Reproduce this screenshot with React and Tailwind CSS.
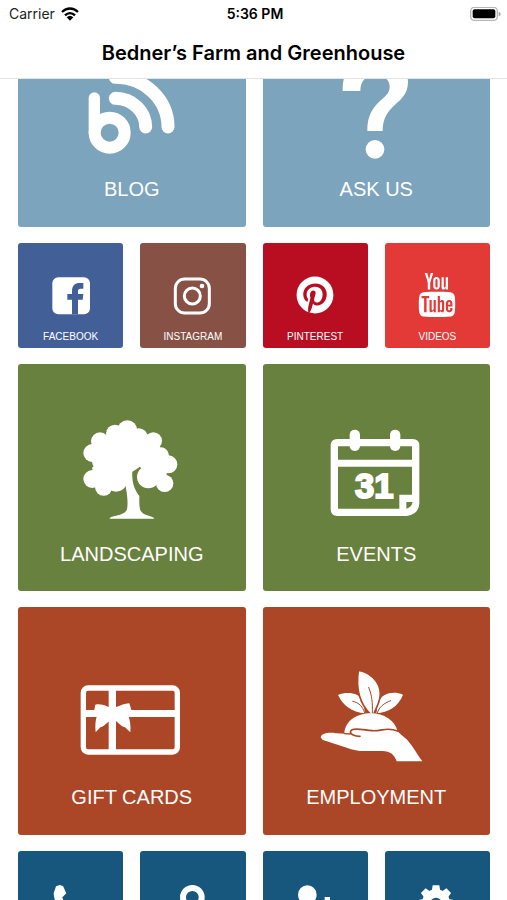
import { FaPinterest } from 'react-icons/fa'
import { TfiYoutube } from 'react-icons/tfi'

const BlogIcon = () => (
  <svg viewBox="186 -75 360 360" className="size-[120px]" fill="none" stroke="white" strokeLinecap="round" aria-hidden="true">
    <circle cx="299" cy="188" r="45" strokeWidth="36" />
    <path d="M253 84V188" strokeWidth="34" />
    <path d="M316 85A91 86 0 0 1 407 171" strokeWidth="39" />
    <path d="M316 22A157 149 0 0 1 474 171" strokeWidth="39" />
  </svg>
)

const QuestionIcon = () => (
  <svg viewBox="184 -75 360 360" className="size-[120px]" fill="white" aria-hidden="true">
    <path d="M264 63C264 -10 300 -45 362 -45C420 -45 460 -15 460 35C460 105 384 98 384 183H338C338 90 405 92 405 50C405 27 385 16 362 16C335 16 317 32 317 63Z" />
    <circle cx="361" cy="238" r="28" />
  </svg>
)

const TreeIcon = () => (
  <svg viewBox="36 27 360 360" className="size-[120px]" fill="white" aria-hidden="true">
    <circle cx="202" cy="88" r="30" />
    <circle cx="165" cy="98" r="27" />
    <circle cx="120" cy="121" r="27" />
    <circle cx="97" cy="156" r="27" />
    <circle cx="97" cy="234" r="27" />
    <circle cx="131" cy="258" r="26" />
    <circle cx="168" cy="238" r="34" />
    <circle cx="236" cy="110" r="28" />
    <circle cx="280" cy="120" r="26" />
    <circle cx="302" cy="164" r="25" />
    <circle cx="325" cy="190" r="27" />
    <circle cx="314" cy="247" r="26" />
    <circle cx="265" cy="228" r="34" />
    <circle cx="150" cy="170" r="56" />
    <circle cx="200" cy="145" r="56" />
    <circle cx="262" cy="160" r="44" />
    <path d="M96 200L120 180H205V255H110Z" />
    <path d="M190 180L240 190L236 200L217 212C215 240 222 265 238 285C238 295 237 308 240 325C246 346 278 343 283 353H149C152 343 194 346 201 325C204 310 203 290 197 256Z" />
    <path d="M270 180H320V245H270Z" />
  </svg>
)

const CalendarIcon = () => (
  <svg viewBox="18 -18 360 360" className="size-[120px]" fill="white" aria-hidden="true">
    <path
      fillRule="evenodd"
      d="M82 69H308Q328 69 328 89V262Q326 296 290 300H82Q62 300 62 280V89Q62 69 82 69ZM84 91V131H306V91ZM84 152V278H268V236H306V152ZM289 258V278Q304 275 308 258Z"
    />
    <rect x="119" y="41" width="31" height="64" rx="15" />
    <rect x="240" y="41" width="31" height="64" rx="15" />
    <text
      x="193"
      y="247"
      textAnchor="middle"
      fontSize="104"
      fontWeight="700"
      stroke="white"
      strokeWidth="6"
      className="font-['Liberation_Sans',sans-serif]"
    >
      31
    </text>
  </svg>
)

const GiftCardIcon = () => (
  <svg viewBox="36 -51 360 360" className="size-[120px]" fill="white" aria-hidden="true">
    <rect x="70" y="54" width="282" height="192" rx="14" fill="none" stroke="white" strokeWidth="16" />
    <path d="M146 54H168V246H146ZM70 120H352V141H70Z" />
    <path d="M158 115C145 112 125 98 106 104L102 124L111 137C106 150 105 168 107 187L121 172C136 168 145 152 158 147C171 152 180 168 195 172L211 187C213 168 210 150 205 137L215 122L208 100C190 100 171 112 158 115Z" />
  </svg>
)

const PlantHandIcon = () => (
  <svg viewBox="48 -21 360 360" className="size-[120px]" fill="white" aria-hidden="true">
    <path d="M114 105C140 94 178 98 188 122C194 138 192 150 196 160C155 157 128 135 114 105Z" />
    <path d="M309 104C280 92 246 100 236 126C229 142 232 150 229 160C265 157 295 140 309 104Z" />
    <path
      d="M175 31C206 34 241 62 241 102C240 130 228 142 221 163H212C188 140 165 100 175 31Z"
      stroke="#ab4626"
      strokeWidth="5"
    />
    <path d="M133 220C135 180 175 160 212 160C252 160 285 182 292 212L270 225H150Z" />
    <path d="M62 232C66 218 90 217 108 220L152 222C156 206 185 209 215 213C245 217 262 200 290 212L322 240C340 260 352 285 367 304H290C284 284 270 271 240 273H180C145 268 110 252 68 240Z" />
    <g fill="none" stroke="#ab4626" strokeLinecap="round">
      <path d="M180 229C166 229 148 224 152 213C160 202 190 210 215 212C245 215 260 199 292 213" strokeWidth="5" />
      <path d="M133 221L150 222" strokeWidth="4" />
      <path d="M206 82C216 105 218 130 217 158" strokeWidth="3" />
      <path d="M158 124C178 128 188 140 194 158" strokeWidth="3" />
      <path d="M272 122C250 130 238 142 232 158" strokeWidth="3" />
    </g>
  </svg>
)

const FacebookIcon = () => (
  <svg viewBox="116 112 132 132" className="size-11" aria-hidden="true">
    <rect x="126" y="125" width="113" height="111" rx="18" fill="white" />
    <path
      d="M185 236V192H171V175H185V166C185 150 194 142 208 142H219V159H211C205 159 203 162 203 167V175H219L217 192H203V236Z"
      fill="#435f98"
    />
  </svg>
)

const InstagramIcon = () => (
  <svg viewBox="483 112 132 132" className="size-11" fill="none" stroke="white" strokeWidth="9" aria-hidden="true">
    <rect x="496" y="130" width="102" height="102" rx="28" />
    <circle cx="547" cy="181" r="24" />
    <circle cx="576" cy="151" r="7" fill="white" stroke="none" />
  </svg>
)

const PinterestIcon = () => <FaPinterest className="size-11 p-[3px]" aria-hidden="true" />

const YoutubeIcon = () => <TfiYoutube className="size-11" aria-hidden="true" />

const PhoneIcon = () => (
  <svg viewBox="116 166 132 132" className="size-11" fill="white" aria-hidden="true">
    <path d="M137 182L148 178L158 181L168 203L156 215C160 232 178 250 196 262L210 252L233 268L226 284C190 300 131 250 130 203Z" />
  </svg>
)

const PinIcon = () => (
  <svg viewBox="483 166 132 132" className="size-11" fill="white" aria-hidden="true">
    <path
      fillRule="evenodd"
      d="M547 178A37 37 0 0 1 584 215C584 240 560 262 547 290C534 262 510 240 510 215A37 37 0 0 1 547 178ZM547 196A19 19 0 1 0 547 234A19 19 0 1 0 547 196Z"
    />
  </svg>
)

const AddUserIcon = () => (
  <svg viewBox="114 166 132 132" className="size-11" fill="white" aria-hidden="true">
    <circle cx="157" cy="207" r="28" />
    <path d="M118 284C118 256 134 242 157 242S196 256 196 284Z" />
    <path d="M209 214H225V230H240V246H225V260H209V246H196V230H209Z" />
  </svg>
)

const GearIcon = () => (
  <svg viewBox="481 166 132 132" className="size-11" aria-hidden="true">
    <g fill="white">
      <circle cx="544" cy="233" r="42" />
      {[0, 45, 90, 135, 180, 225, 270, 315].map((angle) => (
        <path key={angle} d="M534 179H554L557 198H531Z" transform={`rotate(${angle} 544 233)`} />
      ))}
    </g>
    <circle cx="544" cy="233" r="17" fill="#17577d" />
  </svg>
)

const TILES = [
  { label: 'BLOG', color: 'bg-[#7da4bd]', icon: BlogIcon, large: true },
  { label: 'ASK US', color: 'bg-[#7da4bd]', icon: QuestionIcon, large: true },
  { label: 'FACEBOOK', color: 'bg-[#435f98]', icon: FacebookIcon },
  { label: 'INSTAGRAM', color: 'bg-[#875245]', icon: InstagramIcon },
  { label: 'PINTEREST', color: 'bg-[#b90e22]', icon: PinterestIcon },
  { label: 'VIDEOS', color: 'bg-[#e33a38]', icon: YoutubeIcon },
  { label: 'LANDSCAPING', color: 'bg-[#69813e]', icon: TreeIcon, large: true },
  { label: 'EVENTS', color: 'bg-[#69813e]', icon: CalendarIcon, large: true },
  { label: 'GIFT CARDS', color: 'bg-[#ab4626]', icon: GiftCardIcon, large: true },
  { label: 'EMPLOYMENT', color: 'bg-[#ab4626]', icon: PlantHandIcon, large: true },
  { name: 'Call', color: 'bg-[#17577d]', icon: PhoneIcon },
  { name: 'Location', color: 'bg-[#17577d]', icon: PinIcon },
  { name: 'Add contact', color: 'bg-[#17577d]', icon: AddUserIcon },
  { name: 'Settings', color: 'bg-[#17577d]', icon: GearIcon },
]

const Tile = ({ label, name, color, icon: Icon, large }) => (
  <a
    href="#"
    aria-label={name}
    className={`flex flex-col items-center aspect-square rounded-[3px] text-white whitespace-nowrap ${color} ${
      large ? 'col-span-2 pt-[46px] gap-3 text-xl leading-6' : 'pt-[30px] gap-[14px] text-[10px] leading-3'
    }`}
  >
    <Icon />
    {label && <span>{label}</span>}
  </a>
)

const StatusBar = () => (
  <div className="grid grid-cols-3 items-center h-7 pl-[9px] pr-[6px] text-sm">
    <div className="flex items-center gap-[6px] text-[#222]">
      <span>Carrier</span>
      <svg viewBox="0 0 54 42" className="w-[18px] h-[14px]" fill="none" stroke="black" aria-hidden="true">
        <path d="M3 15C17 1 37 1 51 15" strokeWidth="7" />
        <path d="M12 25C21 16 33 16 42 25" strokeWidth="7" />
        <path d="M27 41L17 31Q27 22 37 31Z" fill="black" stroke="none" />
      </svg>
    </div>
    <span className="text-center font-semibold">5:36 PM</span>
    <svg viewBox="0 0 93 42" className="w-[31px] h-[14px] justify-self-end" aria-hidden="true">
      <rect x="2" y="1" width="80" height="39" rx="11" fill="white" stroke="#b5b5b5" strokeWidth="4" />
      <rect x="8" y="7" width="68" height="27" rx="6" fill="black" />
      <path d="M86 14Q92 16 92 21T86 28Z" fill="#a3a3a3" />
    </svg>
  </div>
)

const App = () => (
  <div className="h-screen overflow-hidden bg-white font-['Liberation_Sans',Arial,sans-serif]">
    <header className="fixed top-0 inset-x-0 z-10 bg-white border-b border-[#e3e3e3] text-black font-[Inter,sans-serif]">
      <StatusBar />
      <h1 className="h-[50px] text-center text-xl font-semibold leading-[50px]">Bedner’s Farm and Greenhouse</h1>
    </header>

    {/* Grille défilée sous l'en-tête */}
    <main className="-mt-px grid grid-cols-4 gap-x-[17px] gap-y-4 pl-[18px] pr-[17px]">
      {TILES.map((tile) => (
        <Tile key={tile.label || tile.name} {...tile} />
      ))}
    </main>
  </div>
)

export default App
